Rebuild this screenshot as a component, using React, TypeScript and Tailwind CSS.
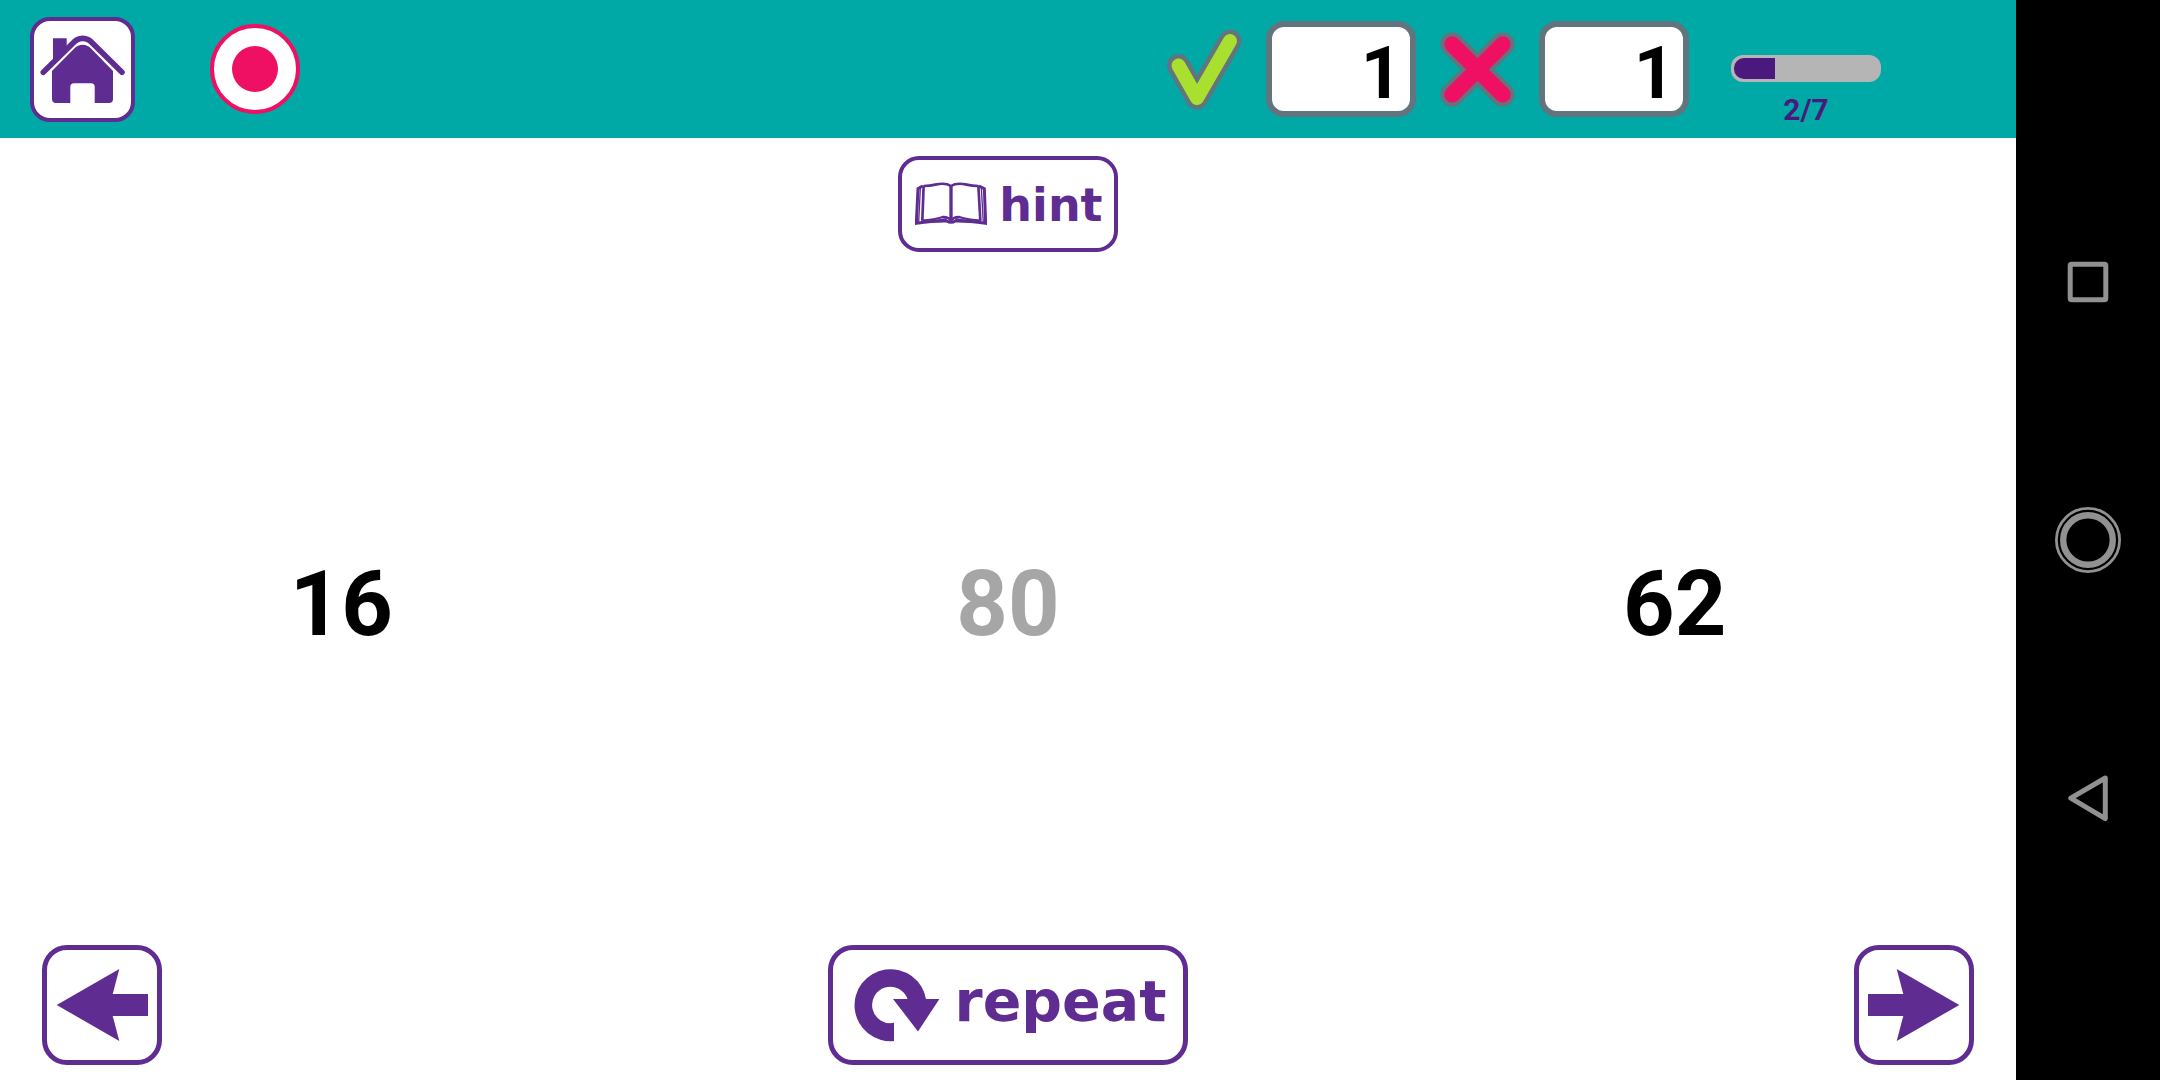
import type { ReactNode } from 'react';

function HomeIcon() {
  return (
    <svg viewBox="4 4 97 97" className="size-full" fill="#5f2c91" aria-hidden="true">
      <path d="M23 21.3H36.7V32L23 45Z" />
      <path
        d="M13.3 55.3L42.3 26.8Q47 21.4 52.7 21.4Q58.4 21.4 63.1 26.8L92 55.3"
        fill="none"
        stroke="#5f2c91"
        strokeWidth="5.6"
        strokeLinecap="round"
      />
      <path d="M22 54L44.3 31.4Q48 27.7 52.7 27.7Q57.4 27.7 61 31.4L83 54V82Q83 86 79 86H64.7V70Q64.7 66.3 61 66.3H44Q40.3 66.3 40.3 70V86H26Q22 86 22 82Z" />
    </svg>
  );
}

function CheckIcon() {
  return (
    <svg viewBox="0 0 75 81" className="h-[81px] w-[75px] shrink-0" fill="none" strokeLinecap="round" strokeLinejoin="round" role="img" aria-label="Correct">
      <path d="M11.5 36.5L30 69L63 12" stroke="#62757f" strokeWidth="23" />
      <path d="M11.5 36.5L30 69L63 12" stroke="#a9e030" strokeWidth="14" />
    </svg>
  );
}

function CrossIcon() {
  return (
    <svg viewBox="0 0 75 75" className="size-[75px] shrink-0" fill="none" strokeLinecap="round" role="img" aria-label="Wrong">
      <path d="M12.3 12.3L62.7 62.7M62.7 12.3L12.3 62.7" stroke="#62757f" strokeWidth="24" />
      <path d="M12.3 12.3L62.7 62.7M62.7 12.3L12.3 62.7" stroke="#ef1064" strokeWidth="16" />
    </svg>
  );
}

function BookIcon() {
  return (
    <svg viewBox="105 126 216 132" className="h-[44px] w-[72px] shrink-0" fill="none" stroke="#5f2c91" aria-hidden="true">
      <path d="M128 138L114 146L109 250Q165 242 200 243Q213 251 226 243Q260 242 317 250L313 146L297 138" strokeWidth="9" />
      <path d="M131 138Q150 138 166 134Q196 127 213 138Q230 127 260 134Q276 138 295 138" strokeWidth="8" />
      <path d="M131 136L127 242M295 136L301 242" strokeWidth="8" />
      <path d="M121 144L116 248M304 144L310 248" strokeWidth="4" />
      <path d="M213 136V246" strokeWidth="10" />
      <path d="M124 242Q165 239 188 231Q204 230 213 241Q222 230 238 231Q262 239 304 242" strokeWidth="7" />
      <path d="M150 243Q180 241 200 237M276 243Q246 241 226 237" strokeWidth="6" />
    </svg>
  );
}

function RepeatIcon() {
  return (
    <svg viewBox="26 23 87 74" className="h-[74px] w-[87px] shrink-0" fill="#5f2c91" aria-hidden="true">
      <path d="M67 96A36 36 0 1 1 99 54H112.4L91 86.4L66 54H80.5A18.2 18.2 0 1 0 67 77.8Z" />
    </svg>
  );
}

function ArrowIcon({ flip = false }: { flip?: boolean }) {
  return (
    <svg viewBox="5 5 110 110" className="size-full" fill="#5f2c91" aria-hidden="true">
      {flip ? (
        <path d="M105.3 60L42.7 24L49.3 49H14V71H49.3L42.7 96Z" />
      ) : (
        <path d="M14.7 60L77.3 24L70.7 49H106V71H70.7L77.3 96Z" />
      )}
    </svg>
  );
}

function ScoreBox({ label, value }: { label: string; value: number }) {
  return (
    <output
      aria-label={label}
      className="flex h-[96px] w-[150px] items-center justify-end rounded-[18px] border-6 border-[#62757f] bg-white pt-[10px] pr-[8px] text-[72px] leading-none font-bold text-black"
    >
      {value}
    </output>
  );
}

function Progress({ done, total }: { done: number; total: number }) {
  return (
    <div className="ml-[18px] w-[150px] self-start pt-[55px] text-center">
      <div
        role="progressbar"
        aria-label="Progress"
        aria-valuemin={0}
        aria-valuemax={total}
        aria-valuenow={done}
        className="h-[27px] rounded-[12px] bg-[#b5b5b5] p-[3px]"
      >
        <div className="h-full rounded-l-[10px] bg-[#4b187d]" style={{ width: `${(done / total) * 100}%` }} />
      </div>
      <p className="mt-3 text-[30px] leading-8 font-bold text-[#4b187d]">
        {done}/{total}
      </p>
    </div>
  );
}

function NavButton({ label, children }: { label: string; children: ReactNode }) {
  return (
    <button type="button" aria-label={label} className="flex h-[258px] w-full items-center justify-center">
      <svg viewBox="0 0 72 72" className="size-[72px]" fill="none" stroke="#919191" aria-hidden="true">
        {children}
      </svg>
    </button>
  );
}

const terms = [
  { value: 16, faded: false },
  { value: 80, faded: true },
  { value: 62, faded: false },
];

export default function App() {
  return (
    <div className="flex min-h-screen bg-white font-[Roboto,sans-serif]">
      <div className="flex min-w-0 flex-1 flex-col">
        <header className="flex min-h-[138px] items-center justify-between bg-[#00a9a5] pr-[135px] pl-[30px]">
          <div className="flex items-center gap-[75px]">
            <button type="button" aria-label="Home" className="size-[105px] overflow-hidden rounded-[20px] border-4 border-[#5f2c91] bg-white">
              <HomeIcon />
            </button>
            <button type="button" aria-label="Record" className="flex size-[90px] items-center justify-center rounded-full border-4 border-[#ef1064] bg-white">
              <span className="size-[46px] rounded-full bg-[#ef1064]" />
            </button>
          </div>
          <div className="flex items-center gap-6 self-stretch">
            <CheckIcon />
            <ScoreBox label="Correct answers" value={1} />
            <CrossIcon />
            <ScoreBox label="Wrong answers" value={1} />
            <Progress done={2} total={7} />
          </div>
        </header>

        <main className="flex flex-1 flex-col items-center pt-[18px]">
          <button
            type="button"
            className="flex h-[96px] items-center gap-[12px] rounded-[21px] border-4 border-[#5f2c91] bg-white pr-[11px] pl-[13px] font-['DejaVu_Sans',sans-serif] text-[46px] leading-none font-bold text-[#5f2c91]"
          >
            <BookIcon />
            <span className="pt-[2px]">hint</span>
          </button>
          <div className="grid w-full flex-1 grid-cols-3 items-center px-2 pt-3 text-center text-[90px] leading-none font-bold">
            {terms.map((term) => (
              <span key={term.value} className={term.faded ? 'text-[#a6a6a6]' : 'text-black'}>
                {term.value}
              </span>
            ))}
          </div>
        </main>

        <footer className="flex items-center justify-between px-[42px] pb-[15px]">
          <button type="button" aria-label="Previous" className="size-[120px] rounded-[25px] border-5 border-[#5f2c91] bg-white">
            <ArrowIcon />
          </button>
          <button
            type="button"
            className="flex h-[120px] items-center gap-[15px] rounded-[25px] border-5 border-[#5f2c91] bg-white pr-[17px] pl-[20px] font-['DejaVu_Sans',sans-serif] text-[57px] leading-none font-bold text-[#5f2c91]"
          >
            <RepeatIcon />
            <span className="pb-2">repeat</span>
          </button>
          <button type="button" aria-label="Next" className="size-[120px] rounded-[25px] border-5 border-[#5f2c91] bg-white">
            <ArrowIcon flip />
          </button>
        </footer>
      </div>

      <nav aria-label="System navigation" className="flex w-[144px] shrink-0 flex-col items-center justify-center bg-black">
        <NavButton label="Recent apps">
          <rect x="18.2" y="18.2" width="35.6" height="35.6" rx="1.5" strokeWidth="5" />
        </NavButton>
        <NavButton label="Home screen">
          <circle cx="36" cy="36" r="31.6" strokeWidth="2.8" />
          <circle cx="36" cy="36" r="24.8" strokeWidth="6.4" />
        </NavButton>
        <NavButton label="Back">
          <path d="M53.3 16L18.8 36.2L53.3 56.6Z" strokeWidth="5" strokeLinejoin="round" />
        </NavButton>
      </nav>
    </div>
  );
}
